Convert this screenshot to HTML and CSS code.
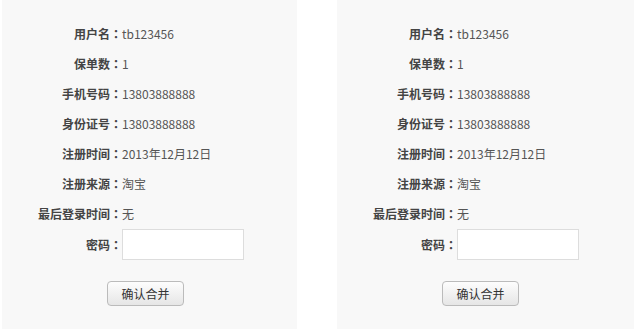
FILE: index.html
```html
<!DOCTYPE html>
<html>
<head>
    <title>账号合并</title>
    <link rel="stylesheet" href="styles.css">
</head>
<body>
    <div class="merge-wrap">
        <div class="merge-box">
            <div class="info-row"><span class="info-label">用户名<span class="colon">：</span></span><span class="info-value">tb123456</span></div>
            <div class="info-row"><span class="info-label">保单数<span class="colon">：</span></span><span class="info-value">1</span></div>
            <div class="info-row"><span class="info-label">手机号码<span class="colon">：</span></span><span class="info-value">13803888888</span></div>
            <div class="info-row"><span class="info-label">身份证号<span class="colon">：</span></span><span class="info-value">13803888888</span></div>
            <div class="info-row"><span class="info-label">注册时间<span class="colon">：</span></span><span class="info-value">2013年12月12日</span></div>
            <div class="info-row"><span class="info-label">注册来源<span class="colon">：</span></span><span class="info-value">淘宝</span></div>
            <div class="info-row"><span class="info-label">最后登录时间<span class="colon">：</span></span><span class="info-value">无</span></div>
            <div class="info-row pwd-row"><label class="info-label" for="pwd1">密码<span class="colon">：</span></label><input type="password" id="pwd1" class="pwd-input"></div>
            <button class="merge-btn">确认合并</button>
        </div>
        <div class="merge-box">
            <div class="info-row"><span class="info-label">用户名<span class="colon">：</span></span><span class="info-value">tb123456</span></div>
            <div class="info-row"><span class="info-label">保单数<span class="colon">：</span></span><span class="info-value">1</span></div>
            <div class="info-row"><span class="info-label">手机号码<span class="colon">：</span></span><span class="info-value">13803888888</span></div>
            <div class="info-row"><span class="info-label">身份证号<span class="colon">：</span></span><span class="info-value">13803888888</span></div>
            <div class="info-row"><span class="info-label">注册时间<span class="colon">：</span></span><span class="info-value">2013年12月12日</span></div>
            <div class="info-row"><span class="info-label">注册来源<span class="colon">：</span></span><span class="info-value">淘宝</span></div>
            <div class="info-row"><span class="info-label">最后登录时间<span class="colon">：</span></span><span class="info-value">无</span></div>
            <div class="info-row pwd-row"><label class="info-label" for="pwd2">密码<span class="colon">：</span></label><input type="password" id="pwd2" class="pwd-input"></div>
            <button class="merge-btn">确认合并</button>
        </div>
    </div>
</body>
</html>
```

FILE: styles.css
```css
body {
    margin: 0;
    font-family: Tahoma, "Noto Sans CJK SC", sans-serif;
    font-size: 12px;
    background-color: #fff;
    color: #555;
}

.merge-wrap {
    display: grid;
    grid-template-columns: 295px 1fr;
    column-gap: 40px;
    padding-left: 2px;
}

.merge-box {
    height: 329px;
    box-sizing: border-box;
    padding-top: 18px;
    background-color: #f8f8f8;
}

.info-row {
    display: flex;
    align-items: center;
    height: 30px;
}

.info-label {
    width: 120px;
    text-align: right;
    font-weight: bold;
    color: #444;
}

/* centered full-width colon, as in the original */
.colon {
    font-family: "Noto Sans CJK TC", sans-serif;
}

.info-value {
    color: #555;
}

.pwd-row {
    height: 31px;
    margin-top: 1px;
}

.pwd-input {
    width: 122px;
    height: 31px;
    box-sizing: border-box;
    border: 1px solid #ddd;
    background-color: white;
    padding: 0 4px;
}

.merge-btn {
    display: block;
    margin: 21px 0 0 105px;
    width: 77px;
    height: 25px;
    font-family: inherit;
    font-size: 12px;
    color: #333;
    border: 1px solid #bbb;
    border-radius: 4px;
    background: linear-gradient(#fdfdfd, #e6e6e6);
    cursor: pointer;
}
```
